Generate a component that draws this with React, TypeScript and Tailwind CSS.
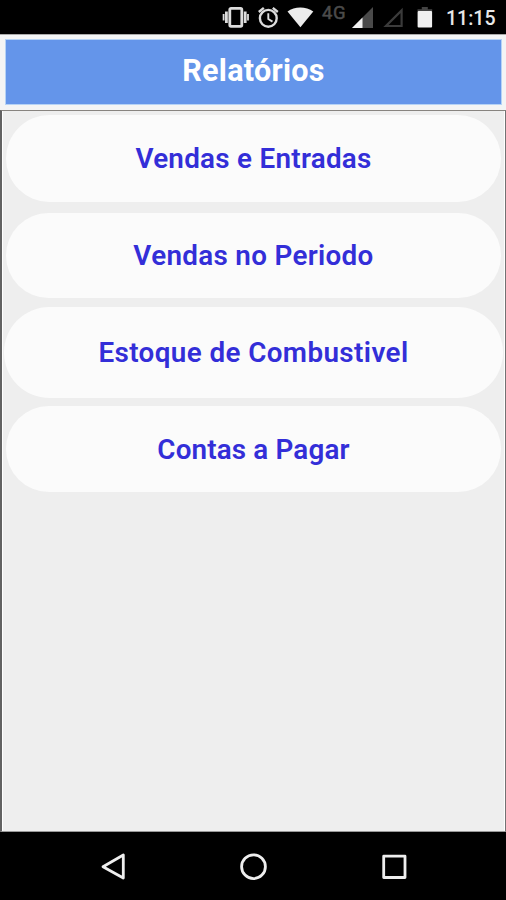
const reports = [
  { label: "Vendas e Entradas", box: "mx-[3px] h-[87px] pt-[1px]", text: "tracking-[0.28px]" },
  { label: "Vendas no Periodo", box: "mx-[3px] mt-[11px] h-[85px] pt-[1px]", text: "tracking-[0.32px]" },
  { label: "Estoque de Combustivel", box: "mx-[1px] mt-[9px] h-[91px] pt-[1px]", text: "tracking-[0.4px]" },
  { label: "Contas a Pagar", box: "mx-[3px] mt-[8px] h-[86px] pt-[2px]", text: "tracking-[0.16px]" },
];

function StatusBar() {
  return (
    <div className="flex h-[34px] shrink-0 items-start bg-black pl-[221px]">
      <svg width="30" height="34" viewBox="221 0 30 34" fill="none" stroke="#dcdcdc">
        <rect x="229.8" y="8.3" width="12" height="18" rx="1.2" strokeWidth="2.8" />
        <path d="M226.4 11.5V23M245.2 11.5V23" strokeWidth="2.8" />
        <path d="M223.6 14V20.5M248 14V20.5" strokeWidth="1.8" />
      </svg>
      <svg width="30" height="34" viewBox="251 0 30 34" fill="none" stroke="#dcdcdc">
        <circle cx="268.3" cy="18.3" r="8.4" strokeWidth="2.4" />
        <path d="M268.3 13.2V19l4.2 2.6" strokeWidth="1.9" />
        <path d="M258.8 12l5-4.2M277.8 12l-5-4.2" strokeWidth="2.3" />
      </svg>
      <svg width="37" height="34" viewBox="281 0 37 34" fill="#ececec">
        <path d="M287.5 11.6C294.5 6 306 6 313.3 11.6L300.4 27.3Z" />
      </svg>
      <span className="ml-[4px] mt-[3px] w-[27px] text-[18.5px] leading-[20px] tracking-[0.5px] text-[#4b4b4b] [-webkit-text-stroke:0.5px_#4b4b4b]">4G</span>
      <svg width="90" height="34" viewBox="349 0 90 34">
        <path d="M373 7V28H352Z" fill="#4a4a4a" />
        <path d="M362.5 17.5V28H352Z" fill="#f2f2f2" />
        <path d="M401.6 10.5V26H386Z" fill="none" stroke="#3b3b3b" strokeWidth="2.2" />
        <path d="M421.8 7h6v2.2h4.4V11.5H417.5V9.2H421.8Z" fill="#444" />
        <rect x="417.6" y="11" width="14.5" height="16.5" rx="1" fill="#f0f0f0" />
      </svg>
      <span className="ml-[7px] mt-[8px] whitespace-nowrap text-[19.5px] font-medium leading-[21px] text-[#e8e8e8]">11:15</span>
    </div>
  );
}

function NavigationBar() {
  return (
    <nav className="flex h-[68px] shrink-0 items-start justify-center bg-black pt-[19px]">
      <svg width="320" height="32" viewBox="93 851 320 32" fill="none" stroke="#eeeeee" strokeWidth="2.8" strokeLinejoin="round">
        <path d="M123.3 855V878L103 866.7Z" />
        <circle cx="253.5" cy="866.7" r="11.9" />
        <rect x="383.7" y="856.2" width="21.3" height="21.3" />
      </svg>
    </nav>
  );
}

export default function App() {
  return (
    <div className="flex h-[900px] w-[506px] flex-col overflow-hidden bg-black font-[Roboto,sans-serif]">
      <StatusBar />
      <header className="h-[76px] shrink-0 border-t border-[#aaaaaa] bg-[#f3f4f5] pl-[5px] pr-[4px] pt-[4px]">
        <div className="flex h-[66px] items-center justify-center border border-[#b5d2f5] bg-[#6495ea] pb-[2px]">
          <h1 className="text-[30.5px] font-bold leading-[34px] tracking-[0.3px] text-white">Relatórios</h1>
        </div>
      </header>
      <main className="flex min-h-0 flex-1 flex-col border-b border-l-2 border-r border-t border-b-[#999999] border-l-[#626262] border-r-[#737373] border-t-[#888480] bg-[#eeeeee]">
        <div className="flex flex-1 flex-col border-x border-white pt-[4px]">
          {reports.map((report) => (
            <button key={report.label} className={`flex shrink-0 items-center justify-center rounded-full bg-[#fbfbfb] ${report.box}`}>
              <span className={`whitespace-nowrap text-[27.8px] font-semibold leading-[32px] text-[#332ed8] ${report.text}`}>{report.label}</span>
            </button>
          ))}
        </div>
      </main>
      <NavigationBar />
    </div>
  );
}
